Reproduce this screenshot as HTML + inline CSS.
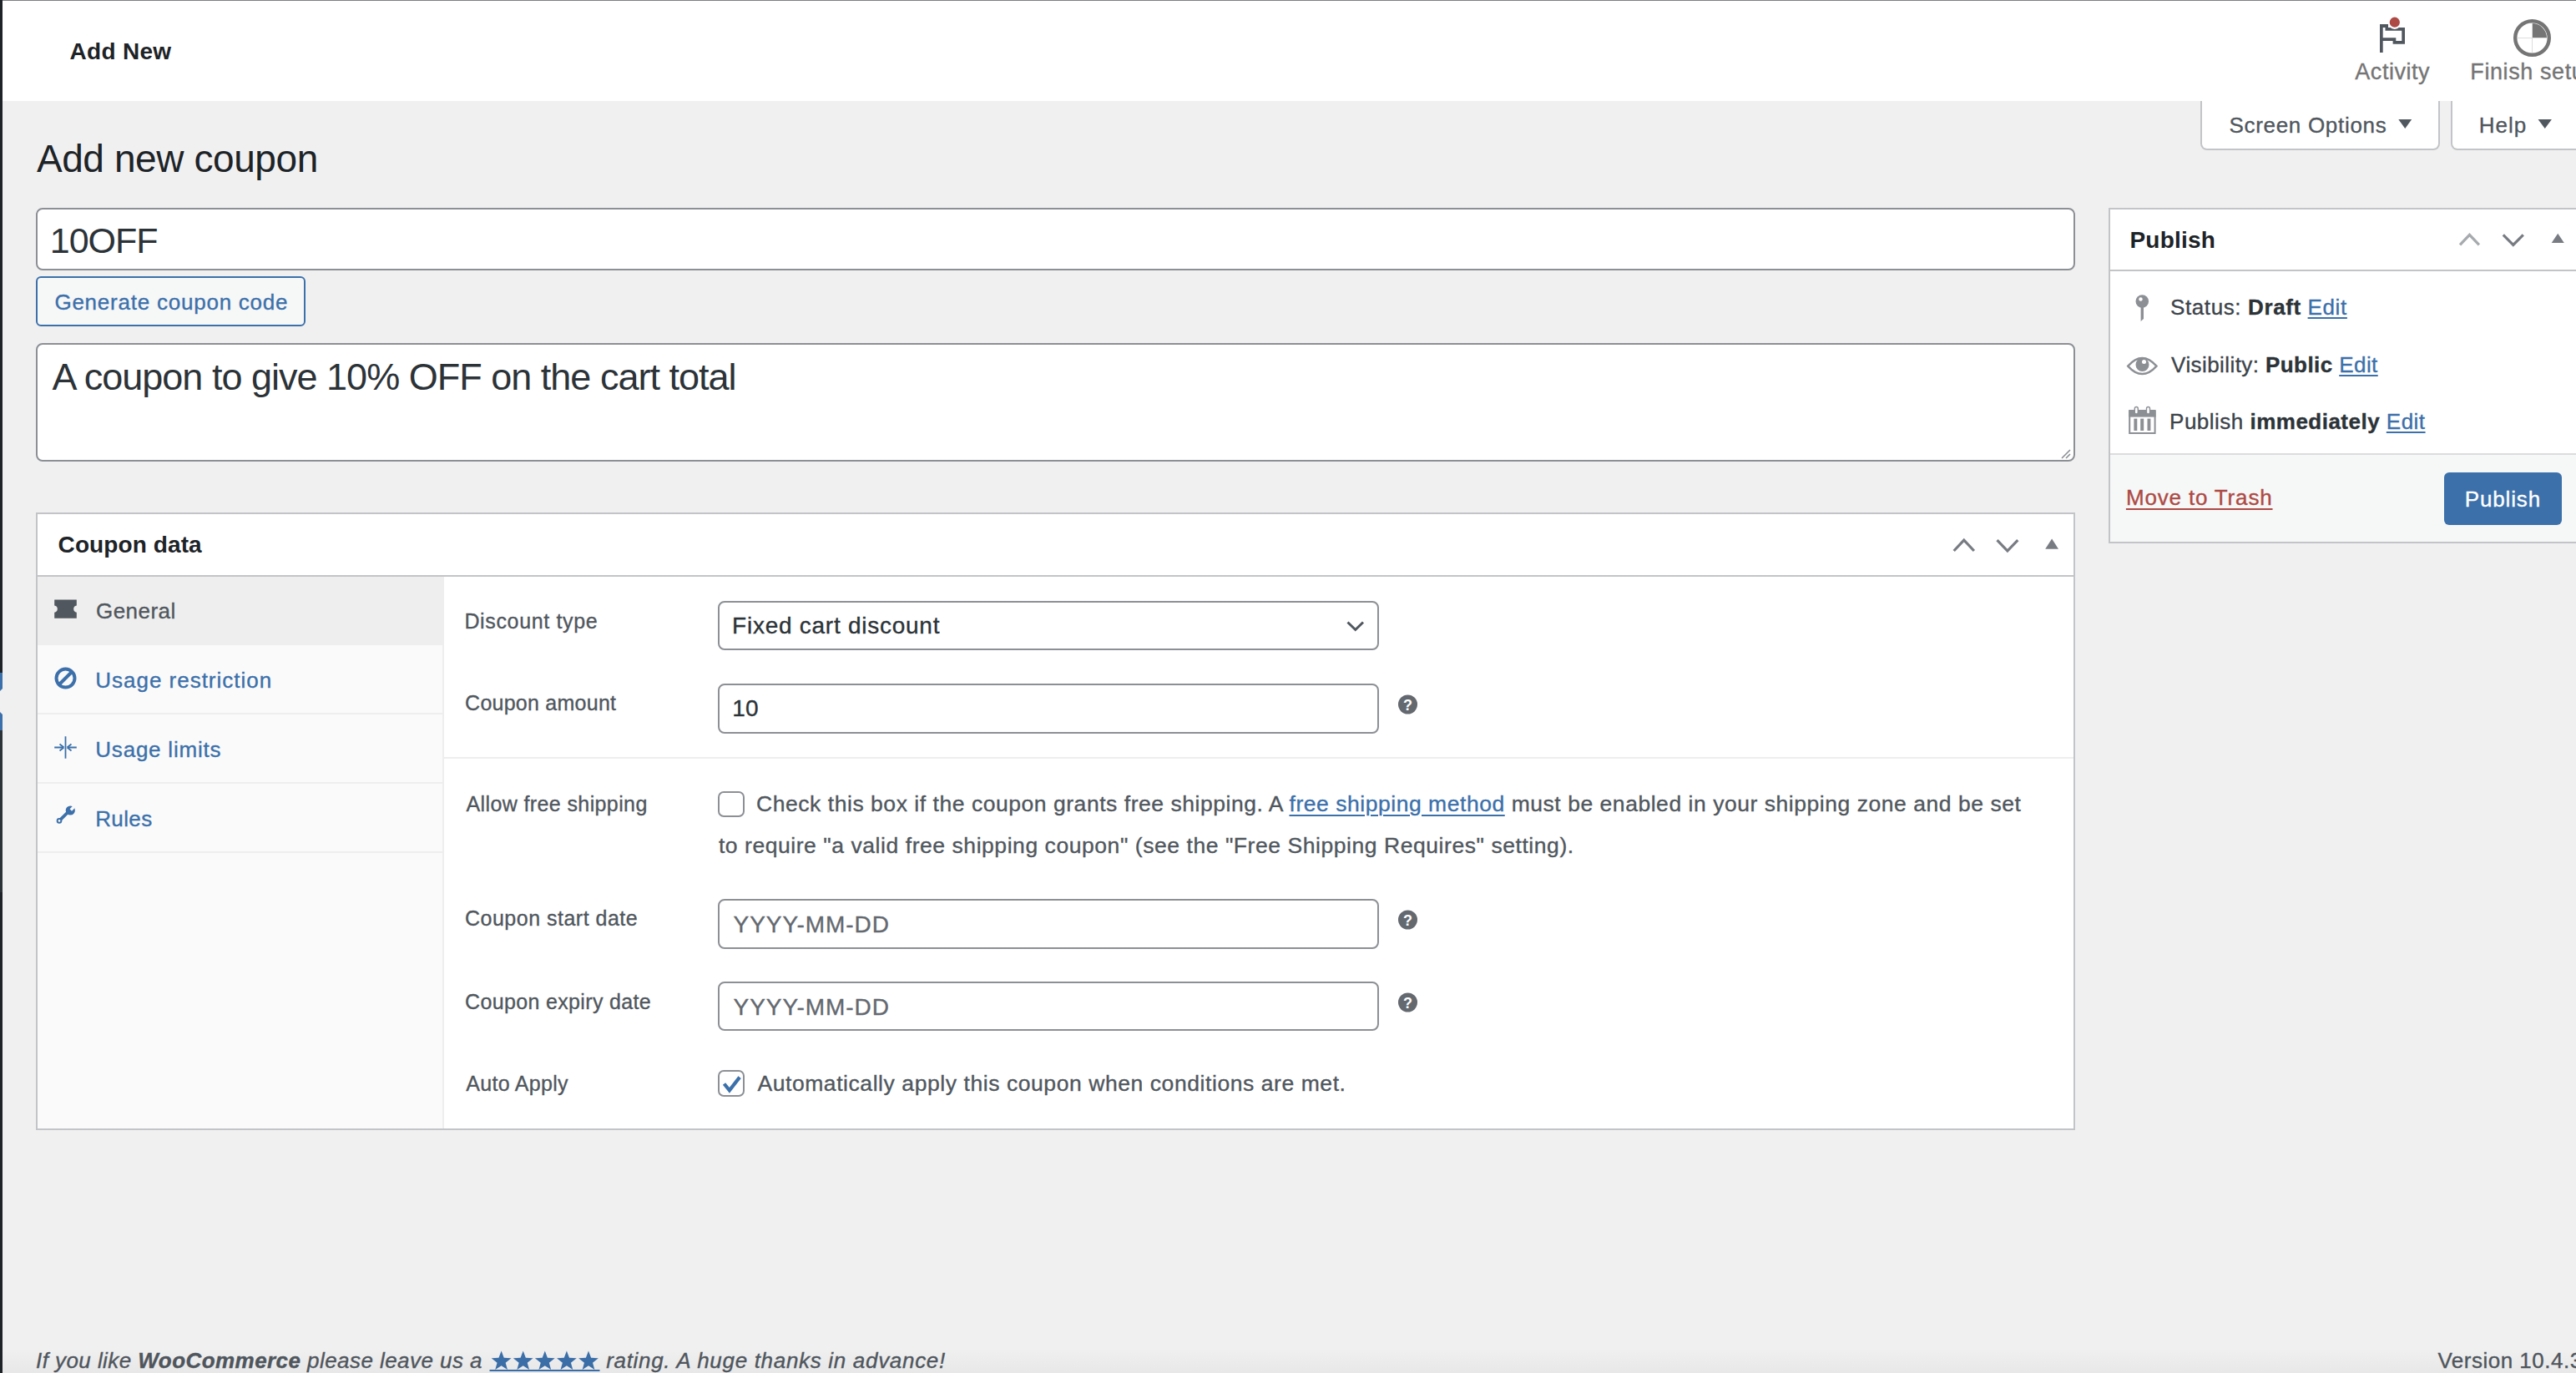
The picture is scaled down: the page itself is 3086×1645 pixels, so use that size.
<!DOCTYPE html><html><head><meta charset="utf-8"><style>
html,body{margin:0;padding:0;}
body{width:3086px;height:1645px;overflow:hidden;position:relative;background:#f0f0f1;font-family:"Liberation Sans",sans-serif;}
.t{position:absolute;white-space:pre;-webkit-text-stroke:0.35px currentColor;}
.t.bd{-webkit-text-stroke:0;}
.r{position:absolute;box-sizing:border-box;}
svg{position:absolute;overflow:visible;}
a{color:inherit}
</style></head><body>
<div class="r" style="left:0px;top:0px;width:3px;height:1645px;background:#1d2327"></div>
<div class="r" style="left:0px;top:806px;width:3px;height:69px;background:#3c70aa"></div>
<svg style="left:0;top:0" width="3086" height="1645"><polygon points="3,825 0,828 0,853 3,856" fill="#f0f0f1"/></svg>
<div class="r" style="left:0px;top:875px;width:3px;height:194px;background:#2c3338"></div>
<div class="r" style="left:3px;top:0px;width:3083px;height:1px;background:#7d7f84"></div>
<div class="r" style="left:3px;top:1px;width:3083px;height:120px;background:#fff"></div>
<div class="t bd" style="left:83.6px;top:43.8px;font-size:28px;line-height:35px;font-weight:bold;font-style:normal;color:#1d2327;letter-spacing:0.277px;">Add New</div>
<svg style="left:0;top:0" width="3086" height="200"><path fill="#50575e" fill-rule="evenodd" d="M2851,29 H2861 V33 H2881 V52.7 H2866.6 V48.9 H2854.7 V63 H2851 Z M2854.7,33 V45.3 H2870.3 V49 H2877.3 V36.8 H2857.5 V33 Z"/><circle cx="2868.8" cy="26.7" r="8.2" fill="#fff"/><circle cx="2868.8" cy="26.7" r="6.1" fill="#ad4a45"/><circle cx="3033.5" cy="45.5" r="20.3" fill="none" stroke="#757575" stroke-width="4.4"/><path d="M3033.5,45.5 V28 A17.5,17.5 0 0 1 3051,45.5 Z" fill="#757575"/><path d="M3016,45.5 H3051 M3033.5,28 V63" stroke="#ddd" stroke-width="1"/></svg>
<div class="t" style="left:2821.3px;top:68.9px;font-size:27px;line-height:34px;font-weight:normal;font-style:normal;color:#757575;letter-spacing:0.535px;">Activity</div>
<div class="t" style="left:2959.3px;top:68.9px;font-size:27px;line-height:34px;font-weight:normal;font-style:normal;color:#757575;letter-spacing:0.600px;">Finish setup</div>
<div class="r" style="left:2636px;top:121px;width:287px;height:59px;background:#fff;border:2px solid #c3c4c7;border-top:0;border-radius:0 0 8px 8px"></div>
<div class="r" style="left:2936px;top:121px;width:174px;height:59px;background:#fff;border:2px solid #c3c4c7;border-top:0;border-radius:0 0 8px 8px"></div>
<div class="t" style="left:2670.4px;top:133.8px;font-size:26px;line-height:32px;font-weight:normal;font-style:normal;color:#50575e;letter-spacing:0.701px;">Screen Options</div>
<div class="t" style="left:2969.7px;top:133.8px;font-size:26px;line-height:32px;font-weight:normal;font-style:normal;color:#50575e;letter-spacing:1.030px;">Help</div>
<svg style="left:0;top:0" width="3086" height="200"><polygon points="2873.3,143.1 2889.2,143.1 2881.25,154" fill="#50575e"/><polygon points="3040.6,143.1 3056.9,143.1 3048.75,154" fill="#50575e"/></svg>
<div class="t bd" style="left:43.9px;top:161.3px;font-size:46px;line-height:58px;font-weight:normal;font-style:normal;color:#1d2327;letter-spacing:-0.408px;">Add new coupon</div>
<div class="r" style="left:43px;top:249px;width:2443px;height:75px;background:#fff;border:2px solid #8c8f94;border-radius:8px"></div>
<div class="t bd" style="left:59.8px;top:260.9px;font-size:43px;line-height:54px;font-weight:normal;font-style:normal;color:#2c3338;letter-spacing:-1.046px;">10OFF</div>
<div class="r" style="left:43px;top:330.5px;width:322.5px;height:60.5px;background:#f6f7f7;border:2px solid #3c70aa;border-radius:6px"></div>
<div class="t" style="left:65.4px;top:345.9px;font-size:26px;line-height:32px;font-weight:normal;font-style:normal;color:#3c70aa;letter-spacing:0.769px;">Generate coupon code</div>
<div class="r" style="left:43px;top:411px;width:2443px;height:142px;background:#fff;border:2px solid #8c8f94;border-radius:8px"></div>
<div class="t bd" style="left:62.6px;top:424.1px;font-size:45px;line-height:56px;font-weight:normal;font-style:normal;color:#2c3338;letter-spacing:-0.987px;">A coupon to give 10% OFF on the cart total</div>
<svg style="left:0;top:0" width="3086" height="600"><path d="M2470,549 L2480,539 M2475,549 L2480,544" stroke="#8c8f94" stroke-width="1.6"/></svg>
<div class="r" style="left:43px;top:614px;width:2443px;height:740px;background:#fff;border:2px solid #c3c4c7"></div>
<div class="r" style="left:45px;top:688.5px;width:2439px;height:2.0px;background:#c3c4c7"></div>
<div class="t bd" style="left:69.6px;top:635.1px;font-size:28px;line-height:35px;font-weight:bold;font-style:normal;color:#1d2327;letter-spacing:0.096px;">Coupon data</div>
<svg style="left:0;top:0" width="3086" height="1645"><polyline points="2340.7,660.0 2352.8,647.1 2364.9,660.0" fill="none" stroke="#787c82" stroke-width="3.2"/><polyline points="2392.5,647.1 2404.9,660.0 2417.3,647.1" fill="none" stroke="#787c82" stroke-width="3.2"/><polygon points="2450.2,657.7 2466,657.7 2458.1,645.6" fill="#787c82"/></svg>
<div class="r" style="left:45px;top:690.5px;width:487px;height:661.5px;background:#fafafa"></div>
<div class="r" style="left:530px;top:690.5px;width:2px;height:661.5px;background:#eee"></div>
<div class="r" style="left:45px;top:690.5px;width:485px;height:82.5px;background:#eee"></div>
<div class="r" style="left:45px;top:854px;width:485px;height:2px;background:#eee"></div>
<div class="r" style="left:45px;top:937px;width:485px;height:2px;background:#eee"></div>
<div class="r" style="left:45px;top:1020px;width:485px;height:2px;background:#eee"></div>
<div class="r" style="left:532px;top:906.5px;width:1952px;height:2.0px;background:#eee"></div>
<div class="t" style="left:115.0px;top:715.7px;font-size:26px;line-height:32px;font-weight:normal;font-style:normal;color:#50575e;letter-spacing:0.460px;">General</div>
<div class="t" style="left:114.3px;top:798.8px;font-size:26px;line-height:32px;font-weight:normal;font-style:normal;color:#3c70aa;letter-spacing:0.984px;">Usage restriction</div>
<div class="t" style="left:114.3px;top:881.5px;font-size:26px;line-height:32px;font-weight:normal;font-style:normal;color:#3c70aa;letter-spacing:0.781px;">Usage limits</div>
<div class="t" style="left:114.2px;top:964.7px;font-size:26px;line-height:32px;font-weight:normal;font-style:normal;color:#3c70aa;letter-spacing:0.390px;">Rules</div>
<svg style="left:0;top:0" width="3086" height="1645"><path d="M65.2,718.6 H91.8 V725.4 A4.25,4.25 0 0 0 91.8,733.8 V740.7 H65.2 V733.8 A4.25,4.25 0 0 0 65.2,725.4 Z" fill="#50575e"/><circle cx="78.5" cy="812.6" r="11" fill="none" stroke="#3c70aa" stroke-width="4"/><path d="M71,820 L86,805" stroke="#3c70aa" stroke-width="4"/><path d="M78.5,882.2 V908.8 M65.2,895.5 H75.5 M91.8,895.5 H81.5" stroke="#3c70aa" stroke-width="1.8" fill="none"/><path d="M76.5,895.5 L71.5,891.5 M76.5,895.5 L71.5,899.5 M80.5,895.5 L85.5,891.5 M80.5,895.5 L85.5,899.5" stroke="#3c70aa" stroke-width="1.8" fill="none"/><path d="M71,983.4 L82.5,972" stroke="#3c70aa" stroke-width="3.8" stroke-linecap="round"/><circle cx="71" cy="983.4" r="3.3" fill="#3c70aa"/><circle cx="71" cy="983.4" r="1.3" fill="#fafafa"/><circle cx="84.3" cy="971" r="5.6" fill="#3c70aa"/><path d="M84.8,970.5 L91,964.3" stroke="#fafafa" stroke-width="3.4"/></svg>
<div class="t" style="left:556.4px;top:728.5px;font-size:25px;line-height:31px;font-weight:normal;font-style:normal;color:#50575e;letter-spacing:0.652px;">Discount type</div>
<div class="t" style="left:557.1px;top:827.2px;font-size:25px;line-height:31px;font-weight:normal;font-style:normal;color:#50575e;letter-spacing:0.250px;">Coupon amount</div>
<div class="t" style="left:558.5px;top:948.0px;font-size:25px;line-height:31px;font-weight:normal;font-style:normal;color:#50575e;letter-spacing:0.386px;">Allow free shipping</div>
<div class="t" style="left:557.0px;top:1085.3px;font-size:25px;line-height:31px;font-weight:normal;font-style:normal;color:#50575e;letter-spacing:0.495px;">Coupon start date</div>
<div class="t" style="left:557.0px;top:1184.5px;font-size:25px;line-height:31px;font-weight:normal;font-style:normal;color:#50575e;letter-spacing:0.349px;">Coupon expiry date</div>
<div class="t" style="left:558.2px;top:1283.4px;font-size:25px;line-height:31px;font-weight:normal;font-style:normal;color:#50575e;letter-spacing:0.322px;">Auto Apply</div>
<div class="r" style="left:860px;top:719.5px;width:792px;height:59.5px;background:#fff;border:2px solid #8c8f94;border-radius:8px"></div>
<div class="t" style="left:877.1px;top:732.1px;font-size:28px;line-height:35px;font-weight:normal;font-style:normal;color:#2c3338;letter-spacing:0.742px;">Fixed cart discount</div>
<svg style="left:0;top:0" width="3086" height="1645"><polyline points="1614.5,745.5 1623.75,754.5 1633,745.5" fill="none" stroke="#50575e" stroke-width="3"/></svg>
<div class="r" style="left:860px;top:818.5px;width:792px;height:60.0px;background:#fff;border:2px solid #8c8f94;border-radius:8px"></div>
<div class="t" style="left:877.2px;top:830.8px;font-size:28px;line-height:35px;font-weight:normal;font-style:normal;color:#2c3338;letter-spacing:0.300px;">10</div>
<div class="r" style="left:860px;top:1076.5px;width:792px;height:60.0px;background:#fff;border:2px solid #8c8f94;border-radius:8px"></div>
<div class="t" style="left:878.5px;top:1089.7px;font-size:28px;line-height:35px;font-weight:normal;font-style:normal;color:#646970;letter-spacing:0.951px;">YYYY-MM-DD</div>
<div class="r" style="left:860px;top:1175.8px;width:792px;height:59.700000000000045px;background:#fff;border:2px solid #8c8f94;border-radius:8px"></div>
<div class="t" style="left:878.5px;top:1188.5px;font-size:28px;line-height:35px;font-weight:normal;font-style:normal;color:#646970;letter-spacing:0.951px;">YYYY-MM-DD</div>
<svg style="left:0;top:0" width="3086" height="1645"><circle cx="1686.5" cy="844" r="11.5" fill="#646970"/><text x="1686.5" y="850.5" text-anchor="middle" font-family="Liberation Sans" font-weight="bold" font-size="18" fill="#fff">?</text></svg>
<svg style="left:0;top:0" width="3086" height="1645"><circle cx="1686.5" cy="1102" r="11.5" fill="#646970"/><text x="1686.5" y="1108.5" text-anchor="middle" font-family="Liberation Sans" font-weight="bold" font-size="18" fill="#fff">?</text></svg>
<svg style="left:0;top:0" width="3086" height="1645"><circle cx="1686.5" cy="1201" r="11.5" fill="#646970"/><text x="1686.5" y="1207.5" text-anchor="middle" font-family="Liberation Sans" font-weight="bold" font-size="18" fill="#fff">?</text></svg>
<div class="r" style="left:860px;top:947.8px;width:32px;height:31.700000000000045px;background:#fff;border:2px solid #8c8f94;border-radius:7px"></div>
<div class="r" style="left:860px;top:1282px;width:32px;height:32px;background:#fff;border:2px solid #8c8f94;border-radius:7px"></div>
<svg style="left:0;top:0" width="3086" height="1645"><polyline points="867.5,1298.5 873.9,1306.3 886.1,1290.6" fill="none" stroke="#3c70aa" stroke-width="4.2"/></svg>
<div class="t" style="left:906.1px;top:947.1px;font-size:26.5px;line-height:33px;font-weight:normal;font-style:normal;color:#50575e;letter-spacing:0.538px;">Check this box if the coupon grants free shipping. A <span style="color:#3c70aa;text-decoration:underline;text-underline-offset:4px;text-decoration-thickness:2px">free shipping method</span> must be enabled in your shipping zone and be set</div>
<div class="t" style="left:860.9px;top:996.7px;font-size:26.5px;line-height:33px;font-weight:normal;font-style:normal;color:#50575e;letter-spacing:0.557px;">to require "a valid free shipping coupon" (see the "Free Shipping Requires" setting).</div>
<div class="t" style="left:907.4px;top:1282.1px;font-size:26.5px;line-height:33px;font-weight:normal;font-style:normal;color:#50575e;letter-spacing:0.571px;">Automatically apply this coupon when conditions are met.</div>
<div class="r" style="left:2526px;top:249px;width:584px;height:402px;background:#fff;border:2px solid #c3c4c7"></div>
<div class="r" style="left:2528px;top:322.5px;width:582px;height:2.0px;background:#c3c4c7"></div>
<div class="t bd" style="left:2551.5px;top:269.8px;font-size:28px;line-height:35px;font-weight:bold;font-style:normal;color:#1d2327;letter-spacing:0.187px;">Publish</div>
<svg style="left:0;top:0" width="3086" height="1645"><polyline points="2947.0,293.4 2958.45,281.3 2969.9,293.4" fill="none" stroke="#a7aaad" stroke-width="3.2"/><polyline points="2998.8,281.3 3010.8,293.4 3022.8,281.3" fill="none" stroke="#787c82" stroke-width="3.2"/><polygon points="3056.7,291 3071.8,291 3064.25,279.8" fill="#787c82"/></svg>
<div class="r" style="left:2528px;top:543px;width:582px;height:106px;background:#f6f7f7;border-top:2px solid #dcdcde"></div>
<div class="t" style="left:2600.0px;top:352.0px;font-size:26px;line-height:32px;font-weight:normal;font-style:normal;color:#3c434a;letter-spacing:0.609px;">Status: <b style="color:#2c3338">Draft</b> <span style="color:#3c70aa;text-decoration:underline;text-underline-offset:3px;text-decoration-thickness:2px">Edit</span></div>
<div class="t" style="left:2601.1px;top:420.8px;font-size:26px;line-height:32px;font-weight:normal;font-style:normal;color:#3c434a;letter-spacing:0.421px;">Visibility: <b style="color:#2c3338">Public</b> <span style="color:#3c70aa;text-decoration:underline;text-underline-offset:3px;text-decoration-thickness:2px">Edit</span></div>
<div class="t" style="left:2599.1px;top:489.4px;font-size:26px;line-height:32px;font-weight:normal;font-style:normal;color:#3c434a;letter-spacing:0.484px;">Publish <b style="color:#2c3338">immediately</b> <span style="color:#3c70aa;text-decoration:underline;text-underline-offset:3px;text-decoration-thickness:2px">Edit</span></div>
<svg style="left:0;top:0" width="3086" height="1645"><circle cx="2566.3" cy="361" r="7.8" fill="#8c8f94"/><circle cx="2564.5" cy="358.5" r="2.2" fill="#fff"/><path d="M2564.6,366 H2568 V382 L2564.6,385 Z" fill="#8c8f94"/><path d="M2549.2,438.6 Q2566.3,419.5 2583.5,438.6 Q2566.3,457.5 2549.2,438.6 Z" fill="none" stroke="#8c8f94" stroke-width="2.4"/><circle cx="2566.5" cy="437" r="8" fill="#8c8f94"/><circle cx="2568.5" cy="433.5" r="2.5" fill="#fff"/><rect x="2551.2" y="492" width="30.4" height="27" fill="none" stroke="#8c8f94" stroke-width="2"/><rect x="2550.2" y="491.8" width="32.4" height="7.8" fill="#8c8f94"/><rect x="2557.3" y="487.5" width="4" height="8.5" rx="2" fill="#fff" stroke="#8c8f94" stroke-width="1.4"/><rect x="2571.5" y="487.5" width="4" height="8.5" rx="2" fill="#fff" stroke="#8c8f94" stroke-width="1.4"/><rect x="2556.4" y="501.6" width="3.9" height="14.4" fill="#8c8f94"/><rect x="2564.2" y="501.6" width="4" height="14.4" fill="#8c8f94"/><rect x="2572.5" y="501.6" width="3.9" height="14.4" fill="#8c8f94"/></svg>
<div class="t" style="left:2546.9px;top:579.8px;font-size:26px;line-height:32px;font-weight:normal;font-style:normal;color:#ad4a45;letter-spacing:0.838px;text-decoration:underline;text-underline-offset:4px;text-decoration-thickness:2px">Move to Trash</div>
<div class="r" style="left:2928px;top:565.5px;width:140.5px;height:63.0px;background:#3c70aa;border-radius:6px"></div>
<div class="t" style="left:2952.7px;top:582.0px;font-size:26px;line-height:32px;font-weight:normal;font-style:normal;color:#fff;letter-spacing:0.865px;">Publish</div>
<div class="t" style="left:43.0px;top:1613.8px;font-size:26px;line-height:32px;font-weight:normal;font-style:italic;color:#50575e;letter-spacing:0.440px;">If you like <b>WooCommerce</b> please leave us a</div>
<div class="t" style="left:726.2px;top:1613.8px;font-size:26px;line-height:32px;font-weight:normal;font-style:italic;color:#50575e;letter-spacing:0.688px;">rating. A huge thanks in advance!</div>
<svg style="left:0;top:0" width="3086" height="1645"><polygon points="600.60,1618.50 603.72,1626.71 612.49,1627.14 605.64,1632.64 607.95,1641.11 600.60,1636.30 593.25,1641.11 595.56,1632.64 588.71,1627.14 597.48,1626.71" fill="#3c70aa"/><polygon points="626.70,1618.50 629.82,1626.71 638.59,1627.14 631.74,1632.64 634.05,1641.11 626.70,1636.30 619.35,1641.11 621.66,1632.64 614.81,1627.14 623.58,1626.71" fill="#3c70aa"/><polygon points="652.80,1618.50 655.92,1626.71 664.69,1627.14 657.84,1632.64 660.15,1641.11 652.80,1636.30 645.45,1641.11 647.76,1632.64 640.91,1627.14 649.68,1626.71" fill="#3c70aa"/><polygon points="678.90,1618.50 682.02,1626.71 690.79,1627.14 683.94,1632.64 686.25,1641.11 678.90,1636.30 671.55,1641.11 673.86,1632.64 667.01,1627.14 675.78,1626.71" fill="#3c70aa"/><polygon points="705.00,1618.50 708.12,1626.71 716.89,1627.14 710.04,1632.64 712.35,1641.11 705.00,1636.30 697.65,1641.11 699.96,1632.64 693.11,1627.14 701.88,1626.71" fill="#3c70aa"/><rect x="586.5" y="1641" width="132" height="2" fill="#3c70aa"/></svg>
<div class="t" style="left:2920.4px;top:1614.0px;font-size:26px;line-height:32px;font-weight:normal;font-style:normal;color:#50575e;letter-spacing:0.500px;">Version 10.4.3</div>
<div class="r" style="left:3px;top:1615px;width:3083px;height:30px;background:linear-gradient(rgba(0,0,0,0),rgba(0,0,0,0.035))"></div>
</body></html>
